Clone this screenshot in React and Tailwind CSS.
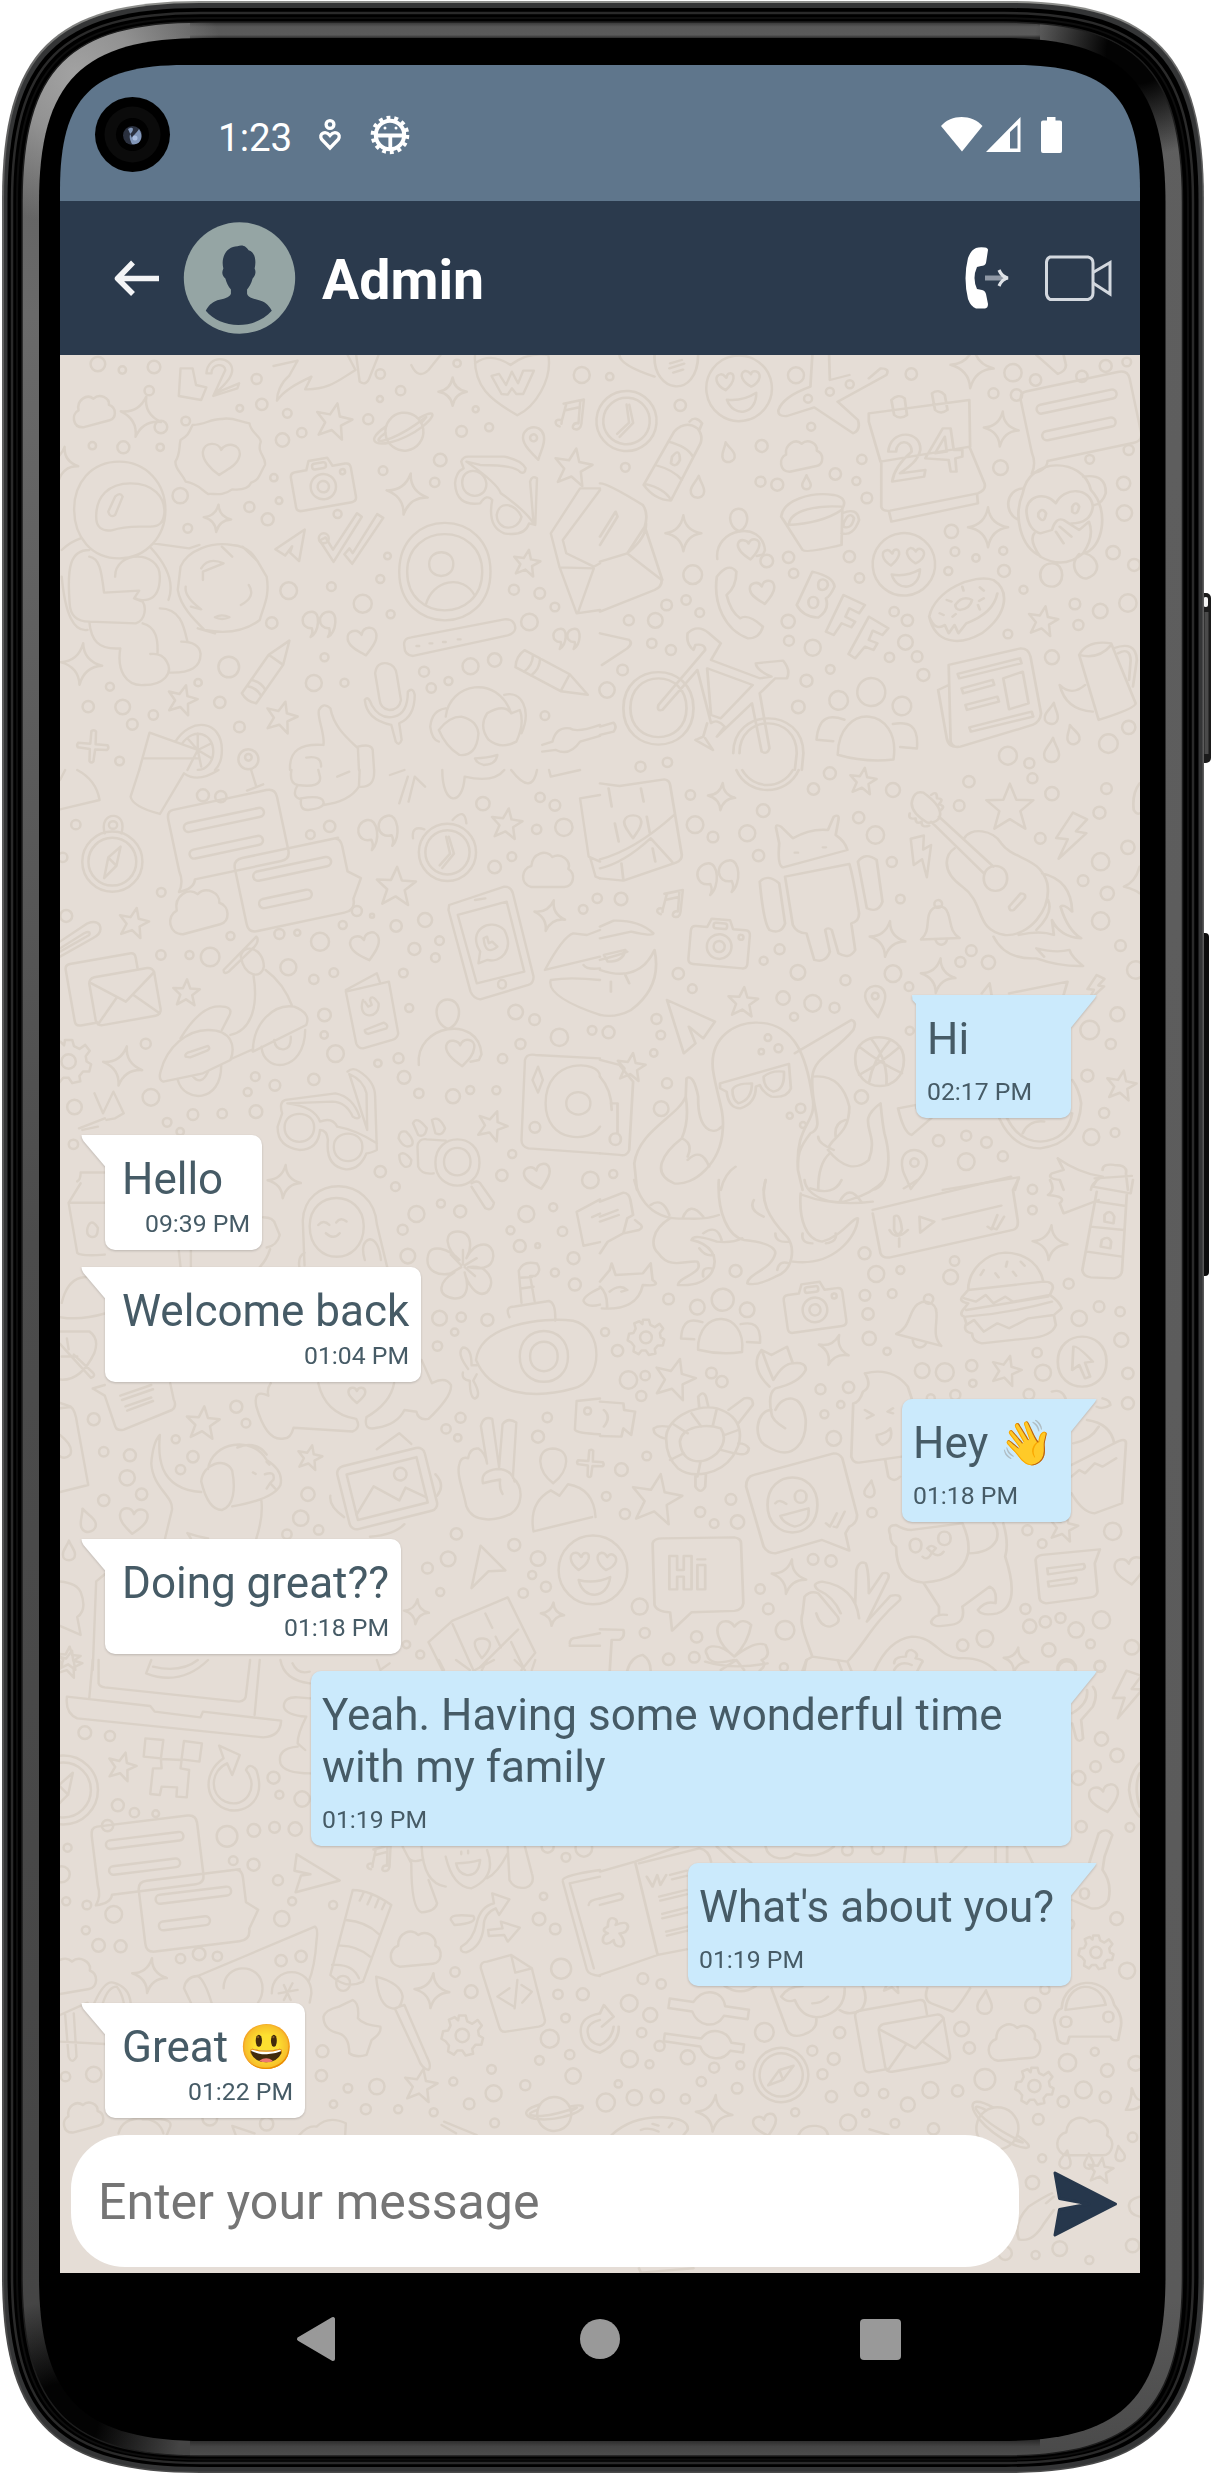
import React from "react";

/* ---------- Wallpaper doodles ---------- */

const SYMBOLS = {
  star: <path d="M0-46 L13-14 47-13 21 9 31 44 0 25-31 44-21 9-47-13-13-14Z" />,
  spark: <path d="M0-50 Q5-8 50 0 Q8 6 0 50 Q-6 8-50 0 Q-8-6 0-50Z" />,
  heart: <path d="M0 44 C-22 26-46 6-46-16 C-46-44-10-48 0-22 C10-48 46-44 46-16 C46 6 22 26 0 44Z" />,
  cloud: <path d="M-34 34 C-58 28-54-4-34-8 C-32-34-4-42 8-26 C26-36 46-18 40-2 C56 8 50 34 32 34 Z" />,
  drop: <path d="M0-48 C10-20 28-6 28 16 C28 52-28 52-28 16 C-28-6-10-20 0-48Z" />,
  quote: <path d="M-14-30 C-50-30-52 22-14 20 C-10 34-14 40-18 46 C8 30 14-30-14-30Z M38-30 C2-30 0 22 38 20 C42 34 38 40 34 46 C60 30 66-30 38-30Z" />,
  note: <path d="M-22 36 C-40 34-40 14-18 18 L-12-32 26-46 30 20 C14 18 10 40 24 38 C38 38 40 24 38 10 L36-50-20-30M-12-12 26-26M-18 18 V28" />,
  bolt: <path d="M-6-50 L26-44 10-14 32-16-10 50-2 6-26 10Z" />,
  pin: <><path d="M0 50 C-14 24-30 10-30-14 C-30-54 30-54 30-14 C30 10 14 24 0 50Z" /><circle cx="0" cy="-14" r="10" /></>,
  camera: <><path d="M-40-22 H-22 L-16-36 H14 L20-22 H40 Q48-22 48-14 V32 Q48 40 40 40 H-40 Q-48 40-48 32 V-14 Q-48-22-40-22Z" /><circle cx="0" cy="8" r="20" /><circle cx="0" cy="8" r="9" /><circle cx="34" cy="-10" r="4" /><rect x="-12" y="-30" width="22" height="9" rx="4" /></>,
  gear: <><path d="M-8-46 H8 L12-32 24-26 37-35 47-22 38-10 40 2 50 8 46 24 32 24 24 34 26 46 8 50 0 38-12 38-20 48-34 40-32 26-40 16-50 10-46-8-34-10-28-22-32-36-18-42-10-34Z" /><circle cx="0" cy="2" r="16" /></>,
  saturn: <><circle r="30" /><path d="M-28-12 C-72 10-40 22 2 8 C46-6 66-34 26-18" /><path d="M-30-2 C-60 14-30 12 0 0 C30-12 50-28 28-10" /></>,
  mail: <><path d="M-50 20 V-40 Q-50-46-44-46 H26 Q32-46 32-40 V-28M-50 20 Q-50 26-44 26 H-24" /><rect x="-26" y="-26" width="76" height="56" rx="7" /><path d="M-24-20 L12 8 50-20M-24 28 L2 2M48 28 L22 2" /></>,
  chat: <><path d="M-42-34 H42 Q50-34 50-26 V22 Q50 30 42 30 H-36 Q-38 38-52 38 Q-46 30-48 20 V-26 Q-48-34-42-34Z" /><rect x="-36" y="-20" width="72" height="8" rx="4" /><rect x="-36" y="4" width="66" height="8" rx="4" /></>,
  chat2: <><path d="M42-34 H-42 Q-50-34-50-26 V22 Q-50 30-42 30 H34 Q44 30 44 20 L54 4 44-4 V-26 Q44-34 38-34Z" /><rect x="-36" y="-20" width="68" height="8" rx="4" /><rect x="-36" y="4" width="46" height="8" rx="4" /></>,
  plane: <path d="M-44 12 L40-44 24 46-2 22 4 4-16 30Z" />,
  cursor: <path d="M-22-50 L46-6 8 4-22 50Z" />,
  love: <><circle r="48" /><path d="M-20 0 C-34-10-34-24-24-24 C-18-24-18-18-16-18 C-14-26-4-26-6-16 C-8-8-14-4-20 0Z M18 0 C6-8 2-22 12-24 C18-24 18-20 20-18 C24-26 34-20 32-12 C30-6 24-2 18 0Z M-20 14 Q2 20 24 10 C20 42-14 42-20 14Z" /></>,
  pencil: <path d="M-12-46 Q0-52 12-46 V18 L0 50-12 18Z M-12-34 Q0-28 12-34M-12-24 Q0-18 12-24M-12 18 H12" />,
  people: <><circle cx="0" cy="-30" r="15" /><circle cx="-34" cy="-18" r="10" /><circle cx="34" cy="-18" r="10" /><path d="M-30 40 C-34-18 34-18 30 40 Q0 46-30 40ZM-36 26 H-54 C-54 0-42-2-26 2 M36 26 H54 C54 0 42-2 26 2" /></>,
  person: <><path d="M0-4 C-12-8-16-20-16-28 C-16-52 16-52 16-28 C16-20 12-8 0-4Z" /><path d="M-44 46 C-48-12 44-24 46 34 L42 42 30 44" /><path d="M18 50 C4 40-6 30-4 20 C0 8 14 14 16 20 C22 8 38 12 36 24 C34 36 26 42 18 50Z" /></>,
  bell: <><path d="M-40 30 C-20 16-26-6-18-22 C-8-40 16-38 20-20 C26-2 20 20 40 34 Z" /><circle cx="2" cy="-40" r="8" /><path d="M-10 34 C-6 48 10 48 14 34" /></>,
  clock: <><circle r="44" /><circle r="34" /><path d="M-2-24 L4 2-12 20M2-24 L10 2-8 24" /></>,
  compass: <><circle r="44" /><circle r="35" /><path d="M12-22 L6 6-12 24-6-6Z M-6-6 L6 6" /></>,
  plus: <path d="M-8-46 Q0-52 6-46 L8-8 44-8 Q50 0 44 6 L8 8 6 44 Q0 52-6 44 L-8 8-44 6 Q-50 0-44-8 L-8-8Z" />,
  slider: <path d="M-50-20 H-20 C-10-40 14-40 20-20 H50 V-8 H20 C12 10-10 10-20-8 H-50Z M-50 24 H-4 C4 8 26 8 34 24 H50 V34 H34 C26 50 4 50-4 34 H-50Z" />,
  photo: <><rect x="-50" y="-36" width="100" height="72" rx="8" /><rect x="-40" y="-26" width="80" height="52" /><path d="M-40 20 L-14-6 10 16 20 4 40 20" /><circle cx="18" cy="-12" r="7" /></>,
  ticks: <path d="M-44 6 L-36 0-22 16 4-44 12-40-18 34Z M-4 20 L2 10 8 16 34-48 44-44 10 32Z" />,
};

/* Patches of the wallpaper: origin, scale, placed symbols [name, x, y, size, rotation], dots and free strokes. */
const PATCHES = [
  {
    o: [60, 350], s: [0.3444, 0.3333],
    items: [
      ["cloud", 96, 180, 125, -15], ["spark", 235, 200, 125, 15], ["star", 795, 212, 115, 12], ["saturn", 1000, 245, 190, -8], ["spark", 1140, 125, 85, 0],
      ["note", 1478, 195, 105, 8], ["pin", 1378, 278, 105, -12], ["star", 1490, 350, 120, 10], ["camera", 762, 395, 190, -10], ["spark", 1008, 432, 125, 10],
      ["spark", 457, 505, 82, 5], ["plane", 670, 585, 105, 0], ["ticks", 840, 575, 200, 10], ["star", 1355, 638, 85, 10], ["quote", 745, 815, 100, 0],
      ["heart", 880, 875, 95, -12], ["pencil", 605, 962, 220, 215], ["spark", 62, 942, 125, 5], ["star", 355, 1048, 95, 15], ["star", 643, 1100, 100, 15],
      ["pencil", 1430, 978, 240, -62], ["plus", 95, 1190, 100, 5], ["quote", 1465, 860, 80, 0], ["spark", 5, 340, 100, 10],
    ],
    dots: [[110, 42, 22], [181, 60, 11], [273, 51, 19], [259, 122, 14], [293, 231, 19], [365, 213, 13], [522, 175, 10], [586, 163, 17], [571, 87, 15], [660, 190, 13], [702, 248, 14], [646, 270, 20], [94, 287, 11], [184, 292, 18], [291, 292, 11], [349, 437, 23], [550, 471, 15], [621, 383, 11], [603, 508, 18], [371, 535, 13], [636, 452, 10], [806, 492, 12], [766, 565, 15], [930, 72, 14], [989, 122, 14], [929, 147, 9], [895, 208, 15], [938, 362, 13], [1088, 397, 14], [1104, 330, 19], [1166, 244, 16], [1246, 232, 12], [1515, 75, 24], [1207, 178, 9], [1153, 40, 11], [951, 618, 10], [930, 687, 12], [788, 710, 13], [664, 722, 25], [879, 761, 27], [615, 819, 17], [960, 793, 12], [490, 951, 31], [768, 922, 12], [737, 999, 24], [826, 998, 12], [1192, 949, 24], [1262, 930, 20], [1057, 965, 15], [1078, 1014, 14], [1128, 993, 12], [1363, 816, 25], [1318, 719, 15], [1393, 730, 16], [1437, 771, 13], [1408, 1097, 13], [145, 1010, 12], [182, 1071, 22], [82, 1070, 17], [210, 1123, 16], [271, 1095, 14], [401, 998, 11], [464, 1057, 17], [521, 1131, 16], [547, 1228, 30], [547, 1222, 10], [173, 1233, 13]],
    d: "M350 55 L385 55 395 105 425 112 410 150 345 138Z M425 70 C430 10 500 20 500 60 C500 90 455 125 450 130 L520 100 515 115 445 138 480 60 C478 38 440 40 440 70Z M620 48 L690 32 665 78 C640 100 630 130 630 152 C650 120 690 100 730 80 L712 118 C780 120 810 90 858 60 L835 15 M860 15 L870 95 Q890 110 900 80 L925 15 M1205 15 C1200 110 1250 150 1328 196 C1380 170 1430 90 1418 15 M1205 40 Q1250 5 1308 45 Q1360 5 1418 15 M1253 78 L1275 72 1295 105 1312 65 1330 100 1345 62 1376 62 1345 132 1325 132 1312 115 1300 134 1282 132Z M1020 45 Q1040 90 1070 60 L1105 15 M470 207 C500 200 520 215 550 220 C555 250 580 255 583 275 C570 310 600 320 595 345 C580 370 580 390 555 398 C545 420 520 420 500 418 C470 440 450 430 430 432 C410 420 400 400 365 395 C355 370 335 360 335 335 C350 310 345 290 350 270 C375 255 375 245 385 225 C420 225 440 205 470 207Z M462 375 C440 360 412 330 415 305 C420 275 460 275 468 300 C480 275 525 280 522 315 C515 350 480 360 462 375Z M41 480 C40 400 90 335 172 335 C250 335 306 400 306 480 C306 560 250 625 172 625 C90 625 42 560 41 480Z M105 500 C105 440 140 400 205 400 C270 400 306 440 303 490 C295 560 240 510 150 541 C120 545 105 530 105 500Z M140 485 L160 440 Q175 425 182 440 L160 495 Q145 505 140 485Z M85 600 C30 600 20 650 28 760 Q30 815 85 815 L220 820 C250 810 250 770 240 755 L215 745 230 722 128 728 C120 660 115 625 85 620 M160 680 C160 600 290 600 290 680 C290 770 225 750 220 745 M85 815 C90 870 110 900 175 895 C165 960 190 1010 245 1005 C300 1005 330 970 310 935 C300 915 280 910 262 912 M240 820 C280 830 285 870 283 912 M318 968 C380 970 410 950 408 910 C405 890 390 875 352 875 M370 875 C360 830 350 775 290 775 M270 580 L375 595 405 585 M265 595 Q340 680 315 750 M5 600 Q30 575 60 565 M5 680 Q20 850 80 840 M350 650 C370 600 440 575 500 585 C560 590 570 630 600 680 C610 740 590 770 580 810 C530 850 470 850 420 840 C390 810 350 770 342 720Z M410 655 Q430 620 475 640 L415 665 415 690 M365 710 Q360 740 410 778 L380 770 M548 705 Q570 740 525 765 M450 802 Q470 790 492 802 Q470 812 450 802Z M470 590 L500 620 M530 590 L575 635 M400 835 L450 850 M985 665 C985 470 1250 470 1250 665 C1250 860 985 860 985 665Z M1008 665 C1008 515 1226 515 1226 665 C1226 820 1008 820 1008 665Z M1072 642 C1072 595 1142 595 1142 642 C1142 690 1072 690 1072 642Z M1062 765 C1080 690 1170 670 1205 738 M1165 335 Q1170 320 1185 320 L1290 320 Q1340 330 1352 355 Q1350 375 1335 365 Q1320 345 1220 345 L1180 335 Q1270 400 1280 430 Q1350 480 1375 520 L1365 395 Q1370 375 1385 385 L1380 525 1362 520 Q1350 560 1290 550 Q1240 530 1255 450 Q1240 430 1220 460 Q1150 470 1147 400 Q1150 365 1172 355Z M1168 400 C1165 350 1230 350 1238 400 C1240 450 1170 450 1168 400Z M1268 495 C1275 450 1320 460 1340 500 C1330 545 1270 545 1268 495Z M1568 415 L1510 415 1425 550 1450 650 1500 790 1568 780 M1568 420 L1460 570 1470 610 1550 650 1568 640 M1450 652 L1550 655 1505 785 M1000 890 Q995 865 1020 862 L1290 808 Q1320 805 1322 835 Q1320 850 1300 856 L1025 918 Q1000 915 1000 890Z M1035 888 h8 M1073 880 h8 M1112 876 h8 M1155 868 h8 M915 970 Q920 935 950 940 Q975 945 978 975 L990 1050 Q985 1080 955 1080 Q930 1075 928 1050Z M885 1050 Q895 1035 905 1065 Q930 1110 970 1100 Q1010 1090 1010 1025 Q1025 1010 1030 1035 Q1030 1100 985 1120 L992 1170 Q985 1190 975 1175 L962 1125 Q890 1110 885 1050Z M230 1260 L260 1148 400 1200 370 1260 M240 1225 L400 1225 M335 1175 C380 1100 470 1110 470 1200 C470 1230 460 1250 450 1260 M355 1180 C390 1130 445 1150 445 1205 C445 1235 425 1260 400 1260 M400 1200 L370 1165 M400 1200 L400 1150 M400 1200 L440 1180 M400 1200 L440 1225 M400 1200 L410 1250 M668 1260 C665 1200 700 1180 765 1185 C770 1150 745 1100 752 1080 Q765 1055 785 1075 C795 1130 830 1160 865 1195 L868 1260 M865 1190 Q905 1180 908 1200 L912 1260 M715 1223 Q760 1215 758 1250 M1120 1100 C1130 1000 1270 970 1310 1090 M1075 1130 Q1080 1080 1120 1075 M1290 1035 C1340 1020 1370 1080 1340 1150 M1075 1130 Q1080 1170 1100 1175 M1100 1140 Q1130 1100 1165 1100 Q1210 1110 1215 1150 Q1210 1220 1160 1215 Q1120 1190 1100 1140Z M1240 1090 Q1290 1060 1310 1090 L1335 1080 Q1350 1120 1325 1175 Q1280 1200 1245 1170 Q1215 1130 1240 1090Z M1205 1225 Q1240 1225 1270 1215 Q1265 1245 1230 1245 Q1210 1240 1205 1225Z M1400 1185 L1430 1175 Q1440 1130 1480 1135 Q1500 1150 1568 1125 M1400 1205 L1440 1200 Q1480 1220 1510 1175 L1568 1158",
  },
  {
    o: [600, 350], s: [0.3896, 0.3333],
    items: [
      ["love", 357, 115, 205, -8], ["clock", 68, 213, 205, 5], ["drop", 328, 308, 66, -12], ["cloud", 515, 315, 125, -12], ["spark", 955, 50, 130, 5], ["spark", 1030, 237, 105, 5],
      ["chat", 1233, 208, 340, -12], ["drop", 251, 412, 72, 5], ["drop", 530, 398, 46, 0], ["spark", 214, 550, 108, 0], ["person", 358, 550, 160, -3], ["spark", 996, 532, 120, 0],
      ["love", 780, 643, 195, -5], ["heart", 418, 727, 80, -10], ["star", 1137, 812, 95, 10], ["people", 690, 1110, 280, 5], ["drop", 1160, 1092, 70, 10], ["drop", 1213, 1155, 65, -15], ["drop", 1160, 1202, 80, 5],
    ],
    dots: [[25, 80, 11], [206, 166, 17], [503, 76, 24], [534, 146, 12], [590, 125, 12], [641, 103, 12], [799, 72, 17], [542, 230, 12], [415, 288, 18], [672, 328, 14], [604, 372, 17], [412, 395, 15], [455, 404, 18], [658, 393, 12], [685, 444, 16], [65, 352, 13], [484, 622, 17], [428, 633, 19], [640, 620, 17], [497, 670, 14], [666, 684, 14], [238, 674, 28], [171, 765, 16], [221, 750, 14], [256, 788, 13], [74, 811, 15], [142, 811, 22], [133, 880, 14], [182, 900, 15], [58, 960, 16], [18, 1020, 23], [483, 814, 20], [485, 872, 15], [546, 893, 24], [530, 992, 18], [591, 958, 13], [509, 1071, 19], [755, 785, 14], [789, 811, 17], [784, 877, 22], [743, 922, 14], [814, 920, 16], [830, 975, 18], [902, 544, 20], [911, 605, 13], [965, 624, 11], [894, 663, 12], [1035, 602, 12], [1037, 663, 18], [1087, 719, 12], [1047, 852, 13], [1028, 353, 22], [1010, 130, 15], [1069, 135, 17], [1060, 68, 26], [1118, 90, 17], [1298, 48, 18], [1237, 79, 17], [1352, 36, 13], [1257, 328, 13], [1357, 300, 15], [1344, 400, 20], [1346, 489, 23], [1317, 608, 20], [1371, 645, 18], [1219, 762, 16], [1284, 783, 22], [1355, 759, 26], [1228, 825, 15], [1160, 922, 21], [1357, 1132, 20], [1305, 1181, 28], [1047, 1217, 27], [1102, 1240, 15], [173, 1237, 14], [104, 1250, 15]],
    d: "M50 15 Q50 45 140 80 M140 15 C135 130 250 150 252 15 M180 40 l30 -10 M178 55 l38 -14 M188 68 l25 -9 M545 15 L540 110 Q470 140 458 180 Q455 200 480 198 L550 172 650 250 Q670 240 662 210 L610 155 735 75 Q745 55 720 55 L690 85 M588 15 L590 90 640 75 M112 405 L190 245 Q220 210 250 235 Q265 255 258 280 L182 452 Q140 450 112 405Z M175 275 Q225 290 238 320 M142 345 Q190 360 210 390 M115 402 Q165 415 182 450 M230 215 Q245 195 262 220 L255 240 M185 320 Q205 290 205 330 Q195 355 182 340Z M690 190 L948 150 950 290 720 335 690 215Z M722 335 L722 470 Q725 485 745 482 L970 430 Q992 420 987 400 L948 290 M742 485 L748 515 970 460 968 435 M748 150 Q765 130 782 145 L788 195 Q770 210 755 195Z M852 130 Q870 115 885 135 L892 180 Q875 195 860 180Z M740 305 C745 235 825 240 822 300 C815 340 780 360 770 370 L835 360 832 380 750 395 Q755 350 800 305 C800 265 760 270 760 305Z M880 235 L900 235 908 300 930 300 930 320 912 325 915 365 900 365 895 330 835 325Z M860 310 L890 305 885 260Z M465 500 C470 450 540 425 600 435 Q640 445 620 480 Q570 520 480 525Z M485 522 C490 480 560 465 620 470 M465 500 L520 600 Q530 610 620 585 L622 480 M622 490 Q660 470 665 510 Q650 560 620 550 M625 520 Q640 480 652 505 Q645 540 625 530Z M1085 430 C1100 320 1240 320 1260 420 C1310 480 1290 600 1240 610 M1085 430 C1060 500 1080 590 1130 618 M1085 415 C1040 420 1035 490 1075 510 M1240 380 Q1300 370 1298 430 Q1290 460 1270 465 M1095 490 C1090 440 1140 420 1170 460 C1190 410 1260 410 1265 470 C1260 520 1220 520 1210 520 M1095 490 Q1100 540 1130 550 L1160 540 Q1170 500 1190 510 L1230 540 1255 515 Q1270 560 1240 610 Q1190 660 1130 620 Q1100 570 1115 550 M1180 530 l30 30 M1170 545 l20 35 M1160 640 C1120 640 1120 710 1160 710 C1195 710 1195 640 1160 640Z M1230 612 C1200 650 1230 690 1250 685 C1290 670 1280 620 1245 610 M1125 490 Q1135 470 1145 490 Q1140 525 1125 500Z M1212 470 Q1222 450 1230 470 Q1225 500 1212 485Z M0 400 Q20 400 110 465 Q125 490 115 530 L70 610 0 635 M70 610 L158 690 Q160 710 140 720 L0 785 M115 530 L160 690 M0 560 L40 485 45 500 0 585 M75 605 Q120 560 118 520 M300 680 Q330 635 350 665 Q350 710 325 735 Q335 785 360 805 Q380 790 418 830 Q410 865 380 865 C320 840 290 760 300 680Z M545 665 Q600 680 602 710 Q590 740 580 745 Q590 780 560 803 Q520 800 505 765Z M560 705 C560 680 585 685 585 705 C580 725 560 725 560 705Z M535 757 C535 735 560 735 560 757 C560 780 535 780 535 757Z M625 735 L680 765 665 790 640 775 630 800 655 815 645 832 620 820 600 855 580 845Z M690 800 L740 835 725 855 700 842 690 870 712 880 702 900 680 890 655 925 638 912Z M845 800 C860 720 960 670 1010 690 C1050 720 1050 790 980 850 C920 890 860 880 845 800Z M845 800 Q860 845 885 825 L895 850 910 825 920 850 940 820 Q1010 790 1020 730 M912 765 Q930 735 955 750 Q950 775 925 780 Q912 778 912 765Z M872 790 l10 5 M890 750 l12 5 M930 710 l3 12 M975 712 l10 10 M985 745 l-12 8 M970 765 l5 14 M905 800 l8 -8 M0 850 L75 870 Q85 880 70 895 L5 945 M60 1075 C60 930 240 930 240 1075 C240 1220 60 1220 60 1075Z M78 1075 C78 955 222 955 222 1075 C222 1190 78 1190 78 1075Z M342 1210 C342 1070 522 1070 522 1210 L518 1260 M358 1210 C358 1090 505 1090 505 1210 L500 1260 M150 1065 L270 900 Q270 880 245 885 L240 900 Q220 880 225 850 Q250 820 280 850 L310 880 285 930 410 985 440 980 Q400 960 400 940 L470 932 Q490 960 480 985 L450 985 410 1030 435 1195 Q430 1215 415 1205 L390 1060 300 1160 320 1130 Q300 1105 285 1120 L250 960 160 1080 Q145 1085 150 1065Z M275 955 L392 1005 310 1105 285 1095Z M245 1170 L265 1160 275 1120 M245 1170 L290 1200 270 1165 M895 945 L1080 895 Q1100 895 1105 920 L1132 1090 Q1130 1115 1110 1125 L925 1190 Q905 1195 900 1175Z M868 1020 L895 1005 M868 1020 L890 1165 Q895 1195 920 1190 M918 972 L1078 925 1082 940 922 985Z M928 1015 L1008 990 1012 1005 932 1030Z M938 1065 L1020 1040 1024 1055 942 1080Z M948 1132 L1108 1085 1112 1100 952 1145Z M1035 985 L1085 965 1100 1060 1050 1078Z M1230 915 Q1250 870 1312 880 L1375 1060 Q1375 1075 1280 1110Z M1230 915 Q1280 930 1312 885 M1318 895 Q1375 870 1378 930 L1368 1010 M1330 910 Q1360 890 1362 930 L1358 990 M1245 1005 Q1210 1040 1180 1005 Q1195 1080 1265 1085 M1120 15 L1175 72 Q1200 60 1195 40 L1190 15 M0 1130 L35 1118 Q45 1130 35 1145 L0 1155",
  },
  {
    o: [60, 770], s: [0.3444, 0.3333],
    items: [
      ["chat", 487, 203, 340, -12], ["chat2", 692, 350, 350, -12], ["compass", 152, 275, 205, 0], ["quote", 915, 182, 120, -12], ["star", 1297, 160, 98, 8], ["clock", 1125, 247, 195, 0], ["star", 976, 348, 125, 3],
      ["cloud", 1418, 300, 150, 0], ["cloud", 398, 420, 175, -15], ["star", 214, 457, 95, 12], ["heart", 888, 530, 95, -15], ["mail", 158, 680, 260, -10], ["spark", 1422, 437, 95, 15], ["star", 367, 667, 85, 3],
      ["person", 1128, 785, 210, -2], ["gear", 25, 872, 135, 0], ["spark", 182, 888, 120, 12], ["star", 1255, 1065, 95, 20], ["heart", 1388, 1220, 85, -15], ["spark", 651, 1235, 100, 5],
    ],
    dots: [[46, 164, 14], [415, 76, 18], [467, 80, 17], [8, 262, 14], [727, 194, 13], [783, 169, 17], [1228, 101, 20], [1384, 178, 14], [1463, 172, 26], [1394, 82, 14], [1437, 106, 16], [1262, 291, 19], [1312, 260, 13], [294, 367, 13], [18, 438, 18], [862, 423, 15], [906, 437, 6], [821, 465, 12], [976, 468, 17], [1060, 450, 21], [637, 492, 15], [689, 488, 9], [755, 515, 27], [495, 498, 12], [293, 555, 14], [376, 555, 12], [436, 561, 28], [663, 592, 24], [795, 608, 13], [737, 628, 14], [1029, 537, 18], [1102, 512, 13], [1090, 563, 13], [997, 609, 13], [1014, 714, 12], [768, 735, 19], [767, 795, 11], [800, 851, 25], [1323, 726, 22], [1378, 749, 16], [1450, 802, 26], [1545, 781, 13], [1337, 822, 15], [1285, 866, 14], [249, 821, 15], [264, 982, 25], [42, 1011, 22], [386, 1034, 16], [471, 1031, 14], [569, 1025, 19], [624, 946, 16], [567, 920, 13], [545, 966, 12], [737, 928, 17], [923, 880, 11], [983, 865, 15], [999, 922, 19], [1042, 970, 14], [1141, 979, 21], [1191, 960, 12], [1267, 961, 12], [311, 1057, 13], [349, 1085, 11], [39, 1123, 14], [1313, 1152, 12], [1379, 1072, 16], [930, 1205, 17], [1283, 1216, 17], [974, 1250, 13], [1540, 1230, 25], [1519, 418, 13], [1560, 385, 14]],
    d: "M0 30 L15 0 M50 0 Q105 30 115 90 L0 118 M230 0 L205 80 Q210 110 290 132 L360 10 Q400 40 460 0 M555 0 L570 50 M543 62 L590 43 M672 0 Q665 40 690 45 Q670 80 700 88 Q695 120 720 120 Q770 115 765 95 Q760 75 700 85 M690 45 Q760 55 755 20 L750 0 M765 105 Q840 95 868 50 L870 0 M868 50 Q915 55 912 0 M805 20 L840 5 M958 15 L1000 0 M985 100 L1010 20 M1012 95 L1030 20 1060 50 M1110 0 C1110 110 1170 110 1175 20 M1175 20 Q1260 40 1290 0 M1310 0 Q1370 80 1385 0 M1420 0 L1425 20 1510 0 M130 190 C110 120 200 120 178 190 M142 165 C142 150 166 150 166 165 C166 180 142 180 142 165Z M1025 205 Q1020 165 1058 178 M1140 150 Q1175 110 1180 160 M0 560 L95 505 Q125 490 115 465 Q105 450 80 460 L0 515 M0 545 L85 495 Q90 480 70 490 L0 535 M1130 405 L1290 350 Q1310 350 1315 370 L1375 620 Q1375 640 1360 645 L1220 688 Q1200 685 1192 665 L1128 420Z M1155 435 L1297 395 1348 605 1210 640Z M1205 390 L1235 385 M1272 643 C1272 625 1295 625 1295 643 C1295 660 1272 660 1272 643Z M1215 580 L1220 545 C1180 480 1250 440 1290 480 C1320 540 1280 580 1240 570Z M1230 505 Q1235 560 1270 530 L1255 515 1245 520 1240 500Z M1568 75 L1510 85 1535 260 1568 275 M1540 265 L1555 320 1568 325 M1568 480 L1530 495 1490 490 Q1460 500 1408 600 L1568 560 M1568 630 Q1480 620 1425 630 Q1410 680 1568 735 M1520 585 Q1530 600 1568 595 M475 600 L570 500 Q580 510 565 530 L490 605 Q475 615 475 600Z M525 560 C530 520 590 530 592 590 C585 630 535 620 525 560Z M562 618 C575 700 560 780 495 795 M597 600 Q650 640 675 710 M350 805 Q400 720 450 710 Q510 705 490 740 L470 780 M292 905 C310 830 370 780 430 780 C500 780 510 830 495 870 L415 910 300 935 Q285 930 292 905Z M365 860 Q360 850 380 845 L430 828 Q440 838 420 845 L378 862Z M342 930 C360 1000 470 1000 468 885 M385 918 Q410 950 430 905 M560 845 C560 760 620 700 680 710 Q730 730 715 765 L560 845Z M495 868 L560 838 M585 830 C590 910 710 910 712 780 M622 810 Q625 840 650 838 Q672 835 670 800 M830 660 L920 610 930 640 M830 665 L955 635 982 790 Q980 805 965 810 L880 835 Q865 835 860 820Z M880 690 C860 750 930 750 925 700 Q905 670 900 690 L905 705 895 710 885 695 M885 780 L940 758 Q955 765 948 775 L895 792 Q885 790 885 780Z M835 905 Q850 890 870 905 Q915 935 915 980 L920 1140 Q900 1150 890 1150 Q870 1200 830 1198 Q770 1190 778 1110 Q775 1080 755 1080 Q750 1140 695 1140 Q630 1130 632 1070 L645 1030 Q635 995 655 990 L800 970 Q850 980 870 1040 Q865 1050 850 1040 Q830 995 790 995 L660 1000 Q740 1010 755 1055 Q790 1040 805 1070 Q860 1080 920 1120 M892 1080 L890 970 Q880 930 840 912Z M652 1072 C652 1018 738 1018 738 1072 C738 1130 652 1130 652 1072Z M795 1130 C795 1078 878 1078 878 1130 C878 1188 795 1188 795 1130Z M1350 870 Q1355 850 1380 855 L1568 865 M1350 870 L1340 1110 Q1340 1130 1360 1135 L1568 1150 M1410 1000 C1410 860 1568 870 1568 920 M1410 1000 C1410 1120 1540 1120 1568 1070 M1470 1000 C1470 955 1540 955 1540 1000 C1540 1045 1470 1045 1470 1000Z M1372 930 L1388 890 1402 930 1388 968Z M983 1105 Q985 1080 1005 1085 Q1030 1110 1022 1125 Q1000 1140 983 1105Z M985 1155 Q1000 1140 1020 1170 Q1020 1195 1000 1190 Q985 1180 985 1155Z M1025 1060 Q1035 1035 1065 1075 Q1060 1105 1040 1095Z M1080 1050 Q1100 1035 1118 1075 Q1110 1100 1090 1090Z M1038 1130 Q1040 1105 1065 1108 L1120 1112 M1038 1130 L1040 1190 Q1050 1215 1085 1210 M1090 1178 C1090 1085 1218 1085 1218 1178 C1218 1270 1090 1270 1090 1178Z M1115 1175 C1115 1120 1192 1120 1192 1175 C1192 1230 1115 1230 1115 1175Z M100 970 L125 1030 155 965 185 1030 160 1045 135 1050 M55 1075 L130 1045 M65 1080 L110 1070",
  },
  {
    o: [600, 770], s: [0.3896, 0.3333],
    items: [
      ["spark", 312, 80, 82, 5], ["star", 675, 32, 85, 8], ["star", 1052, 110, 150, 0], ["bolt", 1205, 200, 145, 15], ["bolt", 826, 260, 125, -25], ["quote", 295, 315, 125, -8], ["note", 178, 402, 95, 8], ["camera", 307, 515, 185, 5],
      ["spark", 738, 507, 108, 8], ["bell", 870, 460, 145, -5], ["spark", 868, 617, 105, 8], ["star", 367, 695, 95, 5], ["pin", 708, 692, 100, -8], ["bolt", 1270, 655, 80, 15], ["star", 80, 890, 90, 8], ["star", 1338, 945, 95, 10], ["pin", 805, 1195, 125, 8],
    ],
    dots: [[232, 75, 14], [419, 122, 19], [548, 57, 17], [590, 10, 18], [752, 60, 21], [664, 143, 17], [707, 195, 26], [244, 164, 25], [290, 201, 16], [378, 190, 24], [407, 257, 17], [749, 276, 15], [922, 107, 16], [947, 35, 17], [1110, 25, 15], [1160, 71, 20], [1282, 128, 18], [1300, 56, 16], [1130, 205, 16], [1355, 232, 20], [1285, 275, 26], [1240, 332, 16], [1302, 370, 20], [1285, 453, 26], [1336, 527, 16], [771, 387, 13], [54, 387, 19], [461, 538, 15], [420, 572, 12], [508, 607, 22], [201, 611, 17], [237, 656, 13], [630, 631, 15], [752, 611, 25], [793, 650, 13], [925, 576, 15], [953, 542, 16], [997, 577, 20], [470, 684, 20], [546, 700, 25], [602, 713, 15], [498, 740, 12], [145, 747, 15], [22, 787, 18], [156, 795, 13], [138, 849, 11], [795, 782, 12], [1257, 780, 28], [1311, 822, 15], [1328, 733, 21], [1375, 600, 26], [1251, 917, 18], [1294, 1029, 15], [1261, 1101, 24], [1322, 1088, 13], [869, 1112, 17], [940, 1097, 15], [992, 1117, 16], [940, 1175, 25], [1034, 1159, 15], [671, 981, 20], [157, 1016, 22], [172, 940, 15], [34, 1212, 12], [515, 1015, 14], [487, 1037, 9], [521, 1065, 9], [431, 803, 10], [458, 835, 12], [414, 845, 8]],
    d: "M0 40 L50 48 165 28 Q178 30 180 45 L210 255 Q210 272 195 278 L60 332 0 325 M0 268 Q90 240 190 135 M0 295 Q60 280 130 205 L185 275 M22 55 L30 110 M38 160 L48 215 M55 280 L60 330 M105 55 L112 95 M120 140 L128 190 M135 235 L142 275 M85 205 C70 180 62 170 62 155 C65 130 105 130 106 155 C106 175 95 185 85 205Z M350 0 C380 80 480 80 510 0 M365 0 C395 60 465 60 495 0 M0 505 L80 485 Q135 500 137 490 Q100 450 35 452 L0 470 M0 600 Q100 640 140 540 Q160 650 80 720 Q40 745 0 735 M0 570 Q50 555 70 545 M10 555 L65 540 Q60 575 20 575Z M28 635 V665 M65 615 L75 640 M452 175 Q450 160 465 170 L495 205 Q540 175 585 180 L600 140 Q615 130 612 150 L605 195 Q630 215 635 240 L470 292 Q455 290 460 220Z M500 248 h8 M572 232 h8 M475 320 L640 282 Q650 320 665 430 Q665 455 645 460 L655 540 Q640 570 612 550 L595 480 Q585 470 578 480 L590 545 Q580 580 550 570 L530 490 Q505 490 495 465Z M410 335 Q430 310 460 340 L475 460 Q465 495 435 480 Q420 460 410 335Z M662 275 Q680 245 710 270 L725 395 Q715 430 685 415Z M800 100 Q805 60 830 68 Q880 110 872 140 Q865 160 840 158 Q800 130 800 100Z M850 75 q15 -15 15 10 q20 0 5 18 q20 5 2 20 M795 130 q-5 20 15 15 q0 20 15 10 q0 20 20 12 M870 140 L1010 290 M850 155 L985 310 M985 325 C985 275 1045 275 1045 325 C1045 375 985 375 985 325Z M935 205 C950 170 1010 180 1030 220 C1060 270 1130 260 1148 340 C1160 420 1100 500 1040 495 C960 480 990 400 930 350 C870 300 890 250 910 235 M1050 410 L1080 370 Q1095 370 1090 385 L1062 420 Q1050 425 1050 410Z M1135 310 Q1210 330 1212 425 Q1190 400 1182 410 Q1200 480 1235 505 Q1180 500 1160 450 L1165 495 Q1130 480 1075 495 M1150 390 Q1165 430 1120 480 M1010 500 Q1040 570 1120 565 Q1180 590 1240 588 Q1210 560 1205 540 Q1170 550 1120 535 L1140 560 M172 690 L295 755 265 805 228 770 245 820 215 850Z M290 900 C280 800 350 755 405 758 C500 760 530 860 545 980 C560 1060 500 1060 508 1200 L520 1260 M290 900 C300 980 320 1020 315 1080 C310 1180 240 1250 190 1240 C130 1210 160 1150 210 1105 Q230 1050 220 980 C200 1040 100 1080 88 1180 L95 1260 M220 980 L222 925 Q240 910 252 980 C250 1080 290 1100 312 1070 M308 940 L485 882 490 955 Q480 985 440 980 Q420 970 410 945 L400 950 Q400 1000 360 1015 Q330 1015 325 965 L308 955Z M340 960 Q345 940 390 940 Q390 990 355 1000 Q340 990 340 960Z M420 920 Q440 900 472 905 Q475 960 445 965 Q420 955 420 920Z M500 850 L645 750 Q660 755 650 780 C600 850 550 860 545 920 C540 1020 580 1070 540 1090 C500 1150 510 1170 508 1200 M545 920 Q620 910 640 1010 C640 1100 590 1100 585 1140 Q640 1220 690 1170 C720 1080 650 1060 720 1000 Q725 1060 730 1090 C750 1170 740 1250 700 1260 M590 1150 Q560 1180 560 1260 M605 1100 Q600 1060 630 1050 M600 1140 Q560 1120 560 1100 M210 1105 Q240 1120 225 1160 M225 1170 Q260 1130 280 1190 M655 865 C655 780 780 780 780 870 C780 975 655 975 655 865Z M665 830 Q720 880 775 910 M665 915 Q720 880 770 830 M695 805 Q740 870 735 945 M745 810 Q700 870 690 940 M1050 670 L1200 635 1190 675 M980 670 L1000 640 1005 675 M765 1015 L812 1005 812 1015 M765 1015 Q780 1090 800 1095 L850 1045 M1025 1045 Q1060 1135 1130 1135 Q1230 1120 1235 1000 Q1230 960 1212 930 M1045 1045 Q1075 1115 1130 1115 Q1200 1110 1212 1030 M1085 1090 Q1100 1050 1140 1055 M1175 1165 Q1230 1210 1290 1220 Q1260 1240 1260 1260 M1175 1165 L1190 1200 1160 1210 Q1145 1225 1180 1230 L1190 1260 M1290 1200 Q1290 1180 1320 1185 Q1355 1185 1350 1210 L1355 1260 M1270 1225 L1365 1218 M1385 40 Q1365 70 1370 120 Q1378 135 1385 130 M1385 290 Q1375 335 1345 350 Q1375 360 1385 370 M0 870 L50 885 85 935 75 1140 Q70 1160 50 1155 L0 1150 M0 920 Q30 960 30 1020 M28 1000 H45 V1090 M40 1090 C20 1090 20 1125 40 1125 C58 1125 58 1090 40 1090Z M310 1260 Q320 1210 348 1190 M420 1260 L425 1230 M880 1260 L1075 1222 1065 1260",
  },
  {
    o: [60, 1110], s: [0.3444, 0.3571],
    items: [
      ["star", 415, 875, 105, 5], ["star", 725, 972, 78, 12], ["photo", 950, 1060, 270, -14], ["heart", 213, 1150, 90, 5], ["drop", 78, 1150, 80, -20], ["drop", 26, 1235, 65, 0], ["cursor", 1235, 1285, 130, 12], ["spark", 1035, 1405, 75, 5], ["spark", 1430, 1412, 70, 5],
      ["heart", 862, 798, 55, 0], ["plus", 1540, 990, 85, 5], ["star", 25, 1535, 75, 5],
    ],
    dots: [[1035, 291, 24], [1106, 262, 12], [1162, 284, 18], [995, 335, 15], [1010, 409, 22], [1335, 381, 18], [1387, 380, 7], [1354, 291, 24], [1432, 272, 12], [1459, 340, 14], [1491, 415, 18], [1308, 337, 12], [1495, 489, 18], [1437, 455, 12], [1102, 583, 22], [1165, 580, 14], [1241, 588, 18], [1146, 622, 11], [1096, 661, 14], [512, 831, 18], [540, 877, 13], [386, 971, 17], [336, 922, 12], [98, 866, 18], [127, 957, 14], [203, 967, 18], [195, 1030, 23], [237, 1076, 17], [127, 1093, 17], [350, 1007, 14], [720, 1076, 20], [699, 1143, 23], [751, 1176, 14], [659, 1188, 14], [1163, 862, 15], [1121, 893, 14], [1155, 918, 11], [1388, 915, 18], [1415, 861, 14], [1151, 1187, 17], [1127, 1257, 22], [1067, 1283, 16], [1104, 1350, 12], [1371, 1302, 12], [1319, 1218, 18], [1388, 1256, 22], [1411, 1335, 15], [1345, 1353, 14], [1046, 1525, 12], [1006, 1497, 11]],
    d: "M60 175 L130 175 M60 175 Q60 195 50 200 M25 260 L130 260 M60 205 L25 260 50 400 Q60 410 130 405 M80 330 Q90 300 110 330 Q110 360 90 355 Q75 350 80 330Z M590 300 Q620 300 625 320 L638 350 Q630 380 600 385 M345 395 L350 440 M380 392 V440 M610 390 Q600 420 580 440 M710 435 L705 310 C710 180 910 180 920 320 L950 440 M725 325 C725 220 880 220 882 325 C882 440 725 440 725 325Z M750 322 Q765 305 782 322 M802 315 Q815 298 832 312 M772 345 Q795 365 812 345 M695 440 Q690 410 710 400 M885 420 Q870 370 900 362 Q925 365 932 420 M1195 205 Q1210 195 1220 205 L1260 260 Q1255 285 1235 275 L1195 215 M1568 250 L1500 285 1520 380 1568 370 M1545 300 L1568 290 M1160 420 C1120 390 1110 340 1155 340 C1200 340 1195 390 1180 415 C1210 360 1260 370 1258 410 C1255 450 1210 445 1185 440 C1240 430 1270 480 1240 510 C1210 530 1180 480 1175 455 C1190 500 1180 530 1145 528 C1090 520 1100 480 1145 455 C1100 470 1060 450 1068 410 C1075 370 1130 390 1160 420Z M1165 435 l-30 -30 M1170 432 l0 -40 M1175 435 l35 -20 M1175 440 l30 25 M1165 440 l-35 20 M0 620 L85 620 Q115 640 100 680 Q60 760 0 755 M0 655 L90 750 Q105 745 95 735 L40 685 M5 690 L50 690 M20 640 L25 670 M0 580 Q60 590 130 570 M5 540 Q20 480 60 470 L130 460 M95 780 L130 770 M95 780 L130 800 160 885 Q165 900 185 895 L325 840 Q340 830 330 810 L320 765 M175 800 L265 770 M180 812 L270 782 M190 830 L265 805 M195 842 L270 815 M0 820 L30 830 Q45 840 50 880 L82 1050 0 1070 M0 835 L30 832 M0 910 Q40 940 30 965 Q15 980 0 970 M570 830 Q560 780 605 800 Q600 780 612 765 M570 830 Q600 930 650 920 Q670 920 678 890 L850 900 Q875 890 860 865 Q770 850 750 765 M970 765 Q960 820 890 860 Q880 900 920 890 Q980 880 1000 840 L1035 845 Q1040 870 1070 865 Q1140 800 1135 770 Q1120 745 1080 765 L1050 700 M1305 580 Q1290 550 1320 550 L1420 535 Q1440 540 1438 590 M1340 540 L1332 450 Q1345 420 1385 430 Q1400 450 1380 465 L1365 465 1378 535 M1335 470 L1370 468 M1338 500 L1375 495 M1208 700 C1220 600 1400 580 1490 590 C1580 610 1580 760 1490 780 C1380 810 1250 800 1208 700Z M1335 690 C1335 595 1475 595 1475 690 C1475 785 1335 785 1335 690Z M1365 690 C1365 635 1445 635 1445 690 C1445 745 1365 745 1365 690Z M1185 725 Q1150 680 1170 665 Q1195 665 1195 715 L1210 715 M1170 735 Q1165 755 1190 758 Q1190 805 1205 808 Q1225 800 1200 758 L1210 740 M1565 500 Q1520 520 1520 535 Q1530 555 1568 545 M265 990 Q270 930 290 910 C285 960 280 1060 410 1070 M265 990 C270 1060 330 1080 325 1120 L305 1200 M430 1005 C440 930 560 910 600 980 Q650 1010 640 1050 Q620 1090 500 1110 M410 1040 C415 990 480 970 500 1010 C510 1060 505 1110 470 1120 Q430 1120 410 1040Z M515 945 Q570 925 600 965 M600 985 l8 8 M560 1015 l8 4 M595 1020 Q625 1010 620 1035 L610 1045 600 1060 M610 1045 L625 1060 M585 1095 Q590 1140 570 1200 M370 1185 L380 1200 M370 1185 Q400 1195 430 1200 M920 950 L985 905 1020 935 M1090 1020 Q1120 1050 1095 1080 M785 1080 Q780 1110 825 1140 M1000 1160 Q970 1190 900 1195 M1180 1110 C1170 1060 1150 1020 1160 990 Q1165 970 1185 975 Q1190 945 1215 948 Q1235 960 1240 990 L1222 885 Q1230 855 1255 865 L1275 1000 1285 880 Q1300 860 1325 875 L1315 1030 C1350 1060 1340 1110 1310 1130 C1270 1150 1200 1160 1180 1110Z M1228 1045 Q1220 1010 1270 1005 Q1310 1005 1320 1040 M1228 1045 Q1250 1040 1278 1035 Q1275 1060 1285 1075 M1432 1045 C1385 1010 1380 950 1430 948 C1485 950 1480 1010 1432 1045Z M1375 1180 Q1360 1100 1425 1065 L1450 1080 1475 1048 Q1550 1060 1555 1140 M1375 1180 L1545 1140 M1500 815 L1568 808 M1500 815 L1495 895 Q1500 905 1568 908 M1522 843 C1522 830 1542 830 1542 843 C1542 856 1522 856 1522 843Z M1070 1490 L1140 1430 1300 1365 1380 1520 1340 1568 M1070 1490 L1110 1568 M1140 1440 L1200 1568 M1235 1410 L1255 1450 M1265 1475 L1280 1505 M1220 1560 L1330 1455 M1310 1490 L1345 1560 M1225 1535 C1190 1490 1205 1478 1230 1480 C1260 1485 1250 1510 1225 1535Z M0 1320 Q50 1325 60 1350 Q80 1400 50 1420 L60 1470 0 1445 M95 1568 L105 1320 130 1300 M1480 1495 Q1480 1478 1500 1478 L1568 1465 M1480 1500 L1568 1500",
  },
  {
    o: [600, 1180], s: [0.3896, 0.3333],
    items: [
      ["spark", 1155, 188, 105, 5], ["camera", 550, 375, 185, -8], ["bell", 828, 425, 175, 12], ["people", 312, 425, 220, 3], ["gear", 118, 470, 110, 0], ["spark", 600, 510, 95, 20], ["star", 192, 595, 130, 15], ["star", 1043, 570, 95, 15], ["star", 145, 955, 160, 10],
      ["drop", 693, 928, 55, 10], ["spark", 485, 1190, 105, 10], ["star", 1190, 1040, 90, 12], ["heart", 1360, 1172, 95, -8], ["love", -18, 1170, 215, 0], ["spark", 1068, 1440, 75, 10],
    ],
    dots: [[1110, 28, 14], [1110, 90, 13], [679, 220, 18], [709, 282, 24], [771, 270, 12], [910, 243, 14], [900, 291, 22], [1203, 311, 15], [348, 273, 18], [176, 357, 16], [13, 456, 12], [45, 512, 17], [680, 346, 16], [750, 341, 13], [688, 402, 17], [691, 475, 20], [737, 514, 11], [827, 572, 22], [885, 577, 27], [954, 557, 17], [957, 610, 11], [1122, 518, 14], [1137, 578, 24], [1230, 415, 23], [1281, 380, 16], [1335, 395, 14], [1338, 480, 21], [1355, 580, 17], [1355, 670, 18], [1101, 643, 16], [912, 645, 15], [849, 655, 12], [73, 600, 26], [116, 587, 14], [106, 648, 15], [286, 579, 16], [313, 605, 17], [566, 628, 15], [638, 622, 17], [618, 674, 11], [576, 703, 12], [600, 775, 22], [120, 828, 13], [55, 869, 19], [16, 949, 13], [64, 1002, 15], [336, 958, 16], [257, 996, 15], [293, 1031, 13], [353, 1026, 20], [698, 998, 14], [547, 1138, 16], [593, 1143, 17], [411, 1227, 14], [432, 1287, 16], [475, 1351, 28], [102, 1280, 24], [115, 1359, 15], [248, 1371, 17], [176, 1438, 17], [242, 1432, 16], [988, 1376, 25], [931, 1396, 17], [1092, 1287, 15], [1103, 1339, 20], [1143, 1326, 17], [1182, 1314, 15], [1222, 1350, 23], [1287, 1320, 26], [1152, 1410, 20], [1259, 1392, 13], [1365, 1402, 22], [1316, 1054, 26], [1097, 1051, 15], [1135, 1091, 13], [1198, 1466, 28], [1283, 1460, 16]],
    d: "M0 65 L60 38 Q75 40 78 60 L85 105 70 115 60 160 20 185 0 220 M0 110 L45 90 M0 125 L48 105 M60 160 L100 150 Q115 140 100 130 L90 120 M88 0 C110 100 170 120 215 115 Q270 120 305 105 M130 75 Q160 50 178 105 M212 115 Q230 60 265 110 M305 0 C300 100 330 170 370 180 Q450 190 450 220 C440 270 380 280 378 310 Q400 320 450 290 C500 270 500 200 480 170 C430 110 410 60 425 0 M395 60 Q380 90 420 110 M450 160 Q450 190 485 185 M180 115 C130 150 130 200 150 220 C180 270 220 240 250 245 C270 280 200 290 200 315 Q260 320 285 280 C310 230 280 190 235 180 Q240 160 300 185 Q340 190 365 175 M265 160 Q300 130 312 180 M255 205 Q270 230 292 225 M455 270 Q460 240 485 250 M265 290 Q260 260 285 265 M525 0 C530 50 600 80 640 60 Q700 40 730 0 M515 40 C510 120 530 180 570 185 C620 170 650 110 662 115 C660 170 600 260 495 245 M520 45 Q600 80 700 65 M615 65 Q640 10 670 65 M540 25 Q600 50 620 0 M520 160 Q515 190 545 190 M580 190 Q610 185 605 160 M700 90 L1055 -10 M700 100 L720 220 Q725 235 745 232 L1060 150 Q1075 145 1072 120 L1060 30 1075 -5 M755 110 Q770 95 775 150 Q765 175 755 150Z M743 150 Q760 185 790 150 M768 175 V200 M820 110 L858 125 822 158Z M880 118 L1030 77 M995 140 L1005 148 1020 105 M1010 145 L1018 148 1037 110 M1155 0 Q1170 30 1150 45 Q1200 50 1180 70 L1190 100 1280 60 M1265 20 L1275 0 M1265 20 L1362 40 1368 0 M1275 35 L1238 270 Q1240 290 1260 292 L1320 295 Q1340 290 1340 270 L1352 45 M1275 65 L1350 78 M1258 140 L1345 150 M1250 215 L1340 230 M1295 125 V105 Q1310 85 1320 110 L1318 130Z M1285 200 L1288 180 Q1305 165 1312 185 L1310 205Z M780 25 L815 0 M945 330 C945 270 990 220 1040 218 C1100 220 1130 260 1138 305 Q1165 305 1162 325 L1155 345 Q1180 365 1185 385 L1165 405 1170 435 Q1160 470 1100 475 L980 490 Q955 485 955 460 Q930 455 940 430 L935 410 Q920 405 935 385 L945 370 Q920 365 930 350Z M935 355 L965 365 990 345 1010 370 1040 350 1060 365 1155 345 M940 390 L1150 350 M940 410 Q1050 400 1160 365 M940 435 L960 420 985 455 1020 430 1050 445 1100 415 1165 405 M945 330 L1138 305 M985 270 l-8 15 M1015 280 l8 12 M1045 245 l-3 15 M1080 245 l10 12 M1060 275 l8 12 M0 305 L25 270 30 250 40 285 110 280 130 250 135 300 Q160 320 110 315 C100 370 60 390 5 385 M0 320 Q20 340 18 385 M25 335 Q50 310 70 330 L55 335 M0 665 L60 670 62 690 90 695 80 765 60 745 55 770 0 768 M10 690 Q30 710 10 740 M1175 545 C1175 445 1300 445 1300 545 C1300 645 1175 645 1175 545Z M1215 500 Q1225 495 1265 545 L1245 548 1258 590 1245 595 1230 555 1212 570Z M435 620 C390 570 400 530 415 510 L440 525 480 500 495 550 Q530 545 528 570 Q510 610 450 625 Q430 640 440 700 Q440 720 475 745 M415 510 Q430 560 445 600 Q470 550 495 550 M440 690 C400 690 390 780 430 800 C500 850 530 780 528 720 C520 640 470 640 450 690 M680 580 Q750 560 790 620 L800 655 M680 580 Q700 620 675 635 Q665 670 650 670 L645 830 Q650 850 665 848 L775 830 M680 690 L702 705 685 715 M752 685 L738 695 752 700 M710 765 Q735 760 745 745 Q755 780 725 795 Q710 785 710 765Z M732 840 L740 890 Q755 910 770 890 M170 780 C165 720 240 670 300 685 C370 710 370 780 340 830 C310 880 240 900 200 865 Q170 830 170 780Z M205 785 C210 740 270 730 310 745 Q330 780 300 820 C260 860 210 850 205 785Z M185 730 L225 760 M235 700 L260 740 M300 685 L290 735 M355 750 L320 765 M345 820 L310 810 M250 890 L258 845 M180 840 L215 820 M255 685 L252 650 Q265 630 272 650 L278 680 M330 690 L370 655 Q395 650 392 675 L355 730 M175 740 Q150 735 138 745 Q135 765 165 775 M350 820 Q380 830 382 805 Q375 790 355 790 M245 885 L245 920 Q258 945 270 920 L272 880 M375 920 Q375 890 395 885 L600 820 Q615 820 622 835 L660 1005 Q660 1030 640 1040 L630 1060 640 1112 570 1080 450 1120 Q430 1120 420 1100Z M430 975 C430 865 558 865 558 975 C558 1085 430 1085 430 975Z M500 950 C500 925 530 925 530 950 C530 975 500 975 500 950Z M450 970 Q460 955 478 972 M463 1008 L535 985 Q540 1030 500 1040 Q470 1030 463 1008Z M580 1030 L590 1040 608 1000 M600 1040 L608 1042 628 995 M135 1090 Q138 1075 160 1075 L345 1072 Q362 1075 362 1090 L368 1270 Q365 1290 345 1293 L235 1297 185 1352 180 1297 Q145 1295 140 1275Z M178 1128 H198 V1170 H215 V1128 H235 V1228 H215 V1190 H198 V1228 H178Z M250 1155 H270 V1228 H250Z M250 1138 H270 M1210 890 L1230 870 1245 880 1270 850 1290 860 1325 835 M1210 940 Q1240 1000 1270 1000 L1340 970 1350 790 Q1350 770 1320 790 M1250 720 Q1310 730 1320 790 L1210 855 M1215 790 Q1260 780 1280 740 M1160 635 Q1185 625 1195 655 M1290 655 Q1310 660 1310 675 Q1290 690 1275 680 M745 1065 Q735 1035 760 1035 Q780 1050 800 1050 L930 1030 Q950 1080 945 1120 Q930 1200 830 1208 Q760 1200 760 1100 Q745 1090 745 1065Z M795 1095 C795 1070 825 1070 825 1095 C825 1125 795 1125 795 1095Z M868 1075 C868 1048 900 1048 900 1075 C900 1102 868 1102 868 1075Z M840 1105 Q850 1090 862 1105 L852 1118Z M852 1118 Q840 1145 828 1130 M852 1118 Q870 1135 882 1115 M945 1120 Q1000 1120 1018 1080 Q1025 1050 1010 1030 M1035 1030 Q1050 1090 1040 1130 C1060 1200 1070 1280 1020 1300 Q980 1310 970 1290 Q990 1260 1015 1270 Q1020 1230 1000 1220 L930 1280 Q940 1330 900 1335 Q850 1345 850 1325 Q860 1300 890 1305 M830 1208 L870 1280 870 1305 M1118 1140 Q1120 1128 1135 1125 L1283 1108 1270 1150 1277 1235 Q1275 1250 1260 1252 L1145 1270 Q1130 1268 1128 1255Z M1148 1165 L1242 1152 Q1248 1165 1238 1168 L1150 1183Z M1150 1205 L1222 1193 Q1226 1206 1216 1210 L1152 1220Z M530 1440 L545 1430 C530 1380 510 1330 520 1300 L525 1250 Q540 1230 560 1240 L610 1310 Q620 1330 590 1340 Q565 1340 555 1300 M530 1440 L520 1472 M545 1430 L635 1445 C680 1390 700 1330 770 1260 Q775 1240 745 1248 L685 1325 740 1195 Q745 1175 725 1180 L690 1240 Q690 1170 682 1150 Q665 1140 658 1170 L655 1270 M665 1315 Q655 1220 570 1205 Q540 1210 560 1230 Q600 1250 618 1300 M635 1445 L645 1472 M345 1430 C300 1390 290 1340 315 1325 Q335 1320 345 1340 Q365 1310 388 1335 Q380 1390 345 1430Z M345 1430 C300 1380 260 1400 275 1425 Q280 1460 345 1440 M345 1430 Q400 1380 425 1395 Q440 1430 415 1440 Q430 1455 410 1472 M705 1472 Q740 1380 800 1370 C860 1370 870 1430 920 1435 Q980 1430 1015 1472 M755 1450 Q755 1430 785 1430 Q785 1410 800 1410 Q820 1420 810 1435 Q835 1440 825 1450 L815 1472 M0 1348 L60 1350 Q65 1370 50 1380 L30 1380 25 1472 M70 1472 Q80 1430 110 1425 Q130 1440 130 1472",
  },
  {
    o: [60, 1660], s: [0.3444, 0.3333],
    items: [
      ["star", 180, 318, 90, 15], ["chat", 252, 593, 325, -7], ["chat2", 400, 758, 335, -7], ["compass", 10, 390, 235, 0], ["note", 925, 597, 90, 5], ["plane", 730, 635, 150, 65], ["cloud", 1032, 865, 150, -5], ["cloud", 30, 945, 150, -10],
      ["spark", 260, 947, 105, 8], ["spark", 1080, 992, 105, 5], ["gear", 1168, 1124, 125, 0], ["star", 1047, 1275, 105, 10], ["cloud", 65, 1368, 120, -15], ["saturn", 1435, 1362, 170, 10], ["star", 25, 10, 85, 15],
    ],
    dots: [[72, 218, 19], [145, 228, 15], [168, 436, 18], [216, 458, 14], [278, 461, 10], [138, 497, 17], [22, 563, 12], [5, 643, 24], [18, 724, 12], [78, 735, 13], [156, 763, 25], [75, 811, 12], [112, 856, 19], [176, 859, 18], [485, 529, 31], [563, 511, 19], [623, 502, 16], [683, 507, 20], [503, 602, 13], [562, 614, 18], [620, 353, 18], [637, 404, 12], [703, 417, 23], [633, 661, 15], [674, 724, 12], [644, 776, 23], [793, 735, 12], [350, 896, 14], [404, 882, 19], [457, 889, 14], [642, 902, 17], [700, 889, 17], [1404, 709, 11], [1391, 777, 19], [1438, 807, 16], [1455, 926, 30], [1147, 936, 14], [1194, 995, 19], [1446, 1003, 14], [1518, 1003, 18], [1468, 1074, 13], [1422, 1136, 27], [1392, 1201, 13], [1480, 1184, 14], [1253, 1228, 13], [1142, 1265, 12], [1259, 1300, 24], [1351, 1276, 15], [1490, 1248, 23], [1188, 1332, 16], [1085, 1357, 12], [920, 1280, 23], [836, 1285, 13], [888, 1348, 15], [982, 1348, 12], [759, 1247, 17], [794, 1333, 11], [762, 1174, 18], [16, 1250, 14], [98, 1243, 23], [1262, 1389, 13], [600, 1392, 20], [435, 1375, 22], [1469, 592, 13], [1416, 560, 18], [1521, 565, 25]],
    d: "M85 115 L95 0 M112 0 L112 70 Q115 80 130 82 L520 125 Q540 122 540 105 L552 0 M565 165 L580 0 M20 112 Q15 160 50 175 L590 232 Q640 230 642 182 L415 155 408 172 275 155 262 138 20 110Z M250 40 Q350 80 430 0 M250 40 L265 0 M270 20 Q350 40 400 0 M640 0 Q650 60 725 70 M675 10 Q690 45 725 35 M650 140 Q650 110 690 112 L728 115 M650 140 Q655 165 715 170 Q690 220 690 250 L712 270 M690 260 Q630 265 640 310 Q650 340 728 340 M248 235 L300 240 293 295 243 290Z M360 243 L412 250 405 305 353 298Z M293 297 L353 300 350 325 375 330 368 412 338 410 340 382 295 380 290 405 262 402 270 325 295 325Z M462 257 L522 285 500 345 485 310 C440 330 430 400 480 425 C540 450 580 380 540 330 Q550 305 570 330 C600 420 540 460 490 450 C420 430 410 340 475 295Z M850 690 Q900 690 962 735 L880 965 Q830 990 785 945Z M882 697 l-12 25 M905 705 l-12 28 M925 717 l-10 25 M943 730 l-8 18 M830 780 Q890 785 925 822 M810 857 Q860 855 900 890 M790 915 Q850 910 868 955 M802 970 C802 940 842 940 842 970 C842 1000 802 1000 802 970Z M995 560 L1020 610 Q1020 750 1050 757 Q1090 755 1095 730 L1070 660 M1050 560 Q1055 670 1120 680 M1120 590 Q1140 680 1195 685 Q1270 650 1240 570 M1300 560 L1305 660 Q1320 690 1355 682 Q1380 670 1370 640 L1350 560 M1300 580 Q1270 640 1240 655 M1150 610 Q1190 610 1220 600 Q1215 650 1180 645 Q1155 640 1150 610Z M1050 600 Q1020 610 1010 590 M1165 575 v8 M1185 572 v8 M1165 860 Q1200 840 1210 790 Q1220 740 1260 730 L1255 700 1305 718 1275 765 1265 745 Q1230 760 1230 800 Q1225 860 1180 877 Q1160 878 1165 860Z M1135 780 Q1130 760 1200 768 Q1215 790 1145 795Z M1243 810 L1285 805 1280 785 1335 803 1300 845 1290 825 1245 828Z M1460 660 Q1465 645 1568 630 M1460 665 L1530 930 Q1535 945 1568 948 M1480 670 L1550 925 M1480 670 L1568 650 M1535 735 Q1535 720 1568 715 M1222 925 Q1220 905 1240 905 L1310 885 1370 925 1408 1080 Q1410 1095 1390 1100 L1295 1115 Q1280 1118 1275 1100Z M1310 885 L1322 938 1370 925 M1305 985 L1270 1010 1318 1040 M1328 960 L1320 1045 M1340 975 L1370 995 1342 1028 M918 950 Q990 970 995 1010 Q990 1050 965 1045 Q925 1040 918 950Z M972 1045 L1000 1035 1065 1190 Q1080 1220 1070 1230 Q1050 1225 1040 1195Z M765 1070 Q770 1050 810 1040 L850 1020 Q870 1030 865 1075 Q880 1095 930 1100 Q935 1120 905 1140 L890 1185 Q860 1195 840 1180 Q840 1130 810 1120 Q765 1110 765 1070Z M360 985 Q365 950 400 948 L740 800 Q750 805 745 840 Q740 920 722 965 M400 948 Q420 960 440 1028 M360 985 L380 1028 M475 985 C475 905 588 905 588 985 Q588 1010 575 1028 M615 1000 C615 915 730 915 730 1000 L725 1028 M635 1000 L690 990 M650 975 L670 1020 M675 970 L650 1020 M100 1028 Q130 960 155 968 Q200 980 205 1028 M125 1028 Q140 980 165 980 Q180 1000 185 1028 M0 1065 L80 1028 M15 1065 L25 1190 Q35 1215 48 1190 L40 1060 M0 1145 L130 1152 M170 1420 Q180 1375 240 1375 Q290 1380 300 1420 M240 1378 Q330 1370 320 1400 L310 1425 M695 1425 Q720 1395 745 1400 Q780 1365 830 1390 L828 1425 M500 1398 L510 1425 M500 1398 L565 1420 M1108 1395 L1150 1420 M1115 1385 L1210 1425 M1568 1060 Q1510 1070 1512 1115 Q1515 1170 1568 1178 M1568 1080 Q1530 1090 1532 1115 Q1535 1150 1568 1155 M920 0 L930 30 957 10 M1100 0 L1115 30 M1150 0 L1190 30 M1240 0 L1225 30 M1320 0 L1350 30 M1380 0 L1370 30 M1205 30 L1260 0",
  },
  {
    o: [600, 1660], s: [0.3896, 0.3333],
    items: [
      ["bolt", 1350, 105, 145, 8], ["heart", 1295, 415, 95, -12], ["gear", 1273, 875, 105, 0], ["gear", 1115, 1276, 115, 0], ["slider", 275, 1080, 240, 8], ["drop", 988, 1028, 78, 5], ["mail", 780, 1150, 260, -10], ["cloud", 1063, 1145, 155, -5], ["compass", 465, 1245, 185, 25],
      ["spark", 293, 1360, 110, 5], ["heart", 425, 1395, 75, -15], ["cloud", 1245, 1430, 165, 0], ["saturn", 1020, 1405, 210, 55], ["star", 752, 965, 70, 10], ["star", 1285, 1530, 80, 8], ["drop", 1334, 1482, 50, -10], ["drop", 1255, 1505, 50, 0], ["drop", 1195, 1500, 60, 10],
    ],
    dots: [[1287, 237, 20], [1327, 286, 20], [1272, 320, 16], [1228, 354, 21], [1235, 500, 17], [1360, 502, 13], [1326, 776, 19], [1353, 932, 24], [1111, 1036, 23], [928, 1107, 22], [948, 1164, 17], [110, 956, 16], [157, 972, 14], [75, 1030, 25], [129, 1065, 21], [107, 1118, 14], [153, 1158, 15], [76, 1197, 25], [127, 1213, 12], [225, 1192, 21], [293, 1223, 15], [360, 1216, 12], [260, 1265, 14], [352, 1285, 16], [422, 1117, 28], [545, 1172, 15], [600, 1197, 18], [571, 1243, 15], [615, 1118, 17], [671, 1288, 20], [728, 1301, 14], [594, 1310, 17], [790, 1334, 21], [848, 1290, 24], [918, 1293, 17], [988, 1258, 31], [1189, 1325, 17], [1241, 1290, 25], [1297, 1312, 17], [1302, 1231, 19], [1200, 1208, 26], [1270, 1175, 12], [1125, 1378, 16], [1367, 1432, 14], [47, 1272, 11], [88, 1313, 23], [147, 1309, 20], [219, 1317, 14], [15, 1328, 27], [501, 1357, 12], [637, 1388, 24], [682, 1360, 11], [757, 1390, 13], [856, 1407, 17], [1110, 1568, 20], [1135, 1495, 12], [1375, 1210, 22], [635, 570, 16], [713, 565, 18], [1142, 988, 14], [472, 22, 12], [1198, 30, 26], [1283, 18, 16], [1180, 1766, 22], [1118, 1785, 12], [1040, 1780, 20], [1256, 1800, 12], [1367, 1757, 20]],
    d: "M270 5 Q340 30 430 10 M310 30 L350 0 370 30 M525 30 L530 0 M620 30 L610 0 M755 30 Q770 0 800 15 M1265 80 Q1280 100 1265 140 L1235 180 1240 235 Q1230 250 1222 235 L1212 190 M1250 90 Q1255 130 1212 160 M1385 310 Q1360 340 1358 390 Q1365 450 1385 470 M1385 340 Q1370 380 1385 440 M1280 520 Q1300 500 1315 525 L1295 590 1290 630 Q1315 670 1305 720 Q1290 750 1260 745 L1212 720 M1280 520 L1258 600 1250 635 M1232 700 C1232 680 1255 680 1255 700 C1255 722 1232 722 1232 700Z M1212 780 Q1222 790 1212 805 M0 635 L90 605 200 560 M90 605 L148 885 0 945 M100 610 L255 565 Q280 570 285 605 M148 885 L222 868 M120 650 L135 680 147 645 155 675 170 645 M180 645 L222 632 M185 658 L222 648 M152 710 L222 690 M155 722 L222 703 M160 762 L225 742 M160 775 L225 757 M170 815 L225 800 M172 827 L225 812 M0 715 L50 700 Q65 705 55 718 L0 735 M20 800 Q20 770 35 775 Q48 780 40 795 Q70 780 72 800 Q70 820 50 820 Q70 850 55 860 Q35 860 35 840 Q15 860 8 845 Q5 825 20 820 Q0 810 20 800Z M320 978 Q360 1010 400 978 M425 560 Q430 590 460 595 Q490 595 500 580 Q560 600 600 560 M300 560 L345 608 M330 560 L388 608 M785 560 L780 608 M860 560 L865 608 M940 560 L900 608 M1015 560 V608 M1045 560 V608 M1090 560 L1110 608 M440 985 L480 1110 Q490 1135 520 1125 Q560 1110 555 1075 M465 1010 Q480 980 520 978 M465 1010 Q480 1030 500 1020 Q520 1080 570 1070 Q630 1050 628 985 M545 1030 Q570 1030 585 1010 M615 1050 Q640 1070 670 1050 Q690 1020 675 980 M840 985 Q830 1020 850 1030 L905 1055 Q915 1050 950 985 M0 1060 L10 1035 35 1070 5 1100 M0 1178 Q50 1150 48 1100 M0 1155 Q30 1140 35 1100 M1165 1080 Q1170 1050 1185 1045 C1190 950 1300 940 1320 1035 Q1345 1070 1335 1110 L1330 1140 Q1315 1145 1310 1130 L1205 1130 1200 1150 Q1185 1155 1175 1140Z M1195 1050 C1200 960 1285 960 1298 1035Z M1182 1085 C1182 1065 1210 1065 1210 1085 C1210 1107 1182 1107 1182 1085Z M1292 1070 C1292 1050 1318 1050 1318 1070 C1318 1092 1292 1092 1292 1070Z M30 1425 Q80 1370 160 1372 Q230 1375 225 1410 L215 1425 M105 1410 q20 -10 45 5 M135 1392 l15 5 M185 1390 l-8 12 M510 1425 Q520 1395 555 1398 Q580 1400 585 1425 M692 1408 L740 1425 M1385 1340 Q1375 1350 1350 1350 Q1365 1320 1365 1285 Q1375 1320 1385 1320 M1075 1738 Q1060 1690 1100 1640 Q1140 1610 1160 1600 M1075 1738 Q1110 1750 1140 1690 L1165 1650 M1145 1630 l20 -20 M1385 1610 Q1355 1620 1358 1640 Q1360 1665 1385 1670 M100 1825 L105 1838 240 1825",
  },
];

function Wallpaper() {
  return (
    <svg className="absolute inset-0 h-full w-full" viewBox="60 355 1080 1918" fill="none" stroke="#dad1c7" strokeWidth="2.5" strokeLinecap="round" strokeLinejoin="round" aria-hidden="true">
      {PATCHES.map((p, i) => {
        const [ox, oy] = p.o;
        const [sx, sy] = p.s;
        return (
          <g key={i}>
            {p.items.map(([name, x, y, size, rot], k) => {
              const s = size / 300;
              return (
                <g key={k} transform={`translate(${ox + x * sx} ${oy + y * sy}) rotate(${rot}) scale(${s})`} strokeWidth={2.5 / s}>
                  {SYMBOLS[name]}
                </g>
              );
            })}
            {p.dots.map(([x, y, r], k) => (
              <circle key={k} cx={ox + x * sx} cy={oy + y * sy} r={r / 3} />
            ))}
            <g transform={`translate(${ox} ${oy}) scale(${sx} ${sy})`} strokeWidth="7">
              <path d={p.d} />
            </g>
          </g>
        );
      })}
    </svg>
  );
}

/* ---------- Device frame ---------- */

function roundRect(x0, y0, x1, y1, r) {
  const c = r * 0.26;
  return `M${x0} ${y0 + r}C${x0} ${y0 + c} ${x0 + c} ${y0} ${x0 + r} ${y0}H${x1 - r}C${x1 - c} ${y0} ${x1} ${y0 + c} ${x1} ${y0 + r}V${y1 - r}C${x1} ${y1 - c} ${x1 - c} ${y1} ${x1 - r} ${y1}H${x0 + r}C${x0 + c} ${y1} ${x0} ${y1 - c} ${x0} ${y1 - r}Z`;
}

function Bezel() {
  const band = roundRect(22, 22, 1182.5, 2456, 180);
  return (
    <svg className="absolute inset-0" width="1211" height="2474" viewBox="0 0 1211 2474" aria-hidden="true">
      <defs>
        <linearGradient id="rim" x1="0" y1="0" x2="0" y2="1">
          <stop offset="0" stopColor="#8f908d" /><stop offset=".03" stopColor="#626262" /><stop offset="1" stopColor="#4a4a4a" />
        </linearGradient>
        <linearGradient id="leftSide" x1="0" y1="0" x2="0" y2="1">
          <stop offset="0" stopColor="#5c5c5c" /><stop offset=".12" stopColor="#6a6a6a" /><stop offset=".5" stopColor="#4c4c4c" /><stop offset="1" stopColor="#444" />
        </linearGradient>
        <linearGradient id="rightSide" x1="0" y1="0" x2="0" y2="1">
          <stop offset="0" stopColor="#5f5f5f" /><stop offset=".93" stopColor="#5a5a5a" /><stop offset="1" stopColor="#484848" />
        </linearGradient>
        <linearGradient id="topBand" x1="0" y1="22" x2="0" y2="38" gradientUnits="userSpaceOnUse">
          <stop offset="0" stopColor="#333" /><stop offset=".3" stopColor="#585858" /><stop offset=".8" stopColor="#5a5a5a" /><stop offset="1" stopColor="#2c2c2c" />
        </linearGradient>
        <linearGradient id="bottomBand" x1="0" y1="2440" x2="0" y2="2456" gradientUnits="userSpaceOnUse">
          <stop offset="0" stopColor="#2a2a2a" /><stop offset=".4" stopColor="#444" /><stop offset="1" stopColor="#4e4e4e" />
        </linearGradient>
        <radialGradient id="shine" cx="75" cy="75" r="150" gradientUnits="userSpaceOnUse">
          <stop offset="0" stopColor="#a2a2a2" /><stop offset=".4" stopColor="#929292" /><stop offset="1" stopColor="#929292" stopOpacity="0" />
        </radialGradient>
        <radialGradient id="fadeTR" cx="1138" cy="52" r="105" gradientUnits="userSpaceOnUse">
          <stop offset=".3" stopColor="#030303" /><stop offset="1" stopColor="#030303" stopOpacity="0" />
        </radialGradient>
        <radialGradient id="fadeBL" cx="62" cy="2420" r="120" gradientUnits="userSpaceOnUse">
          <stop offset=".3" stopColor="#030303" /><stop offset="1" stopColor="#030303" stopOpacity="0" />
        </radialGradient>
        <clipPath id="bandClip"><path d={band} /></clipPath>
      </defs>
      <rect x="1198" y="593" width="13" height="170" rx="5" fill="#1b1b1b" />
      <rect x="1204.500" y="612" width="4" height="142" fill="#4a4a4a" />
      <rect x="1203.500" y="597" width="4.500" height="10" rx="2" fill="#f4f4f4" />
      <rect x="1198" y="933" width="11" height="343" rx="4" fill="#0c0c0c" />
      <path d={roundRect(2, 1, 1204, 2473, 198)} fill="url(#rim)" />
      <path d={roundRect(4, 3, 1202.5, 2471.5, 196)} fill="#343536" />
      <path d={roundRect(7.5, 8, 1198.5, 2467, 193)} fill="#000" />
      <path d={roundRect(12, 13, 1193, 2463, 189)} fill="none" stroke="#2a2a2a" strokeWidth="2.500" />
      <path d={roundRect(17, 18, 1188, 2459.5, 185)} fill="none" stroke="#0e0e0e" strokeWidth="2" />
      <g clipPath="url(#bandClip)">
        <path d={band} fill="url(#leftSide)" />
        <rect x="1040" y="0" width="171" height="2474" fill="url(#rightSide)" />
        <rect x="190" y="20" width="850" height="20" fill="url(#topBand)" />
        <rect x="190" y="2439" width="850" height="20" fill="url(#bottomBand)" />
        <rect x="0" y="0" width="300" height="300" fill="url(#shine)" />
        <rect x="1000" y="0" width="211" height="200" fill="url(#fadeTR)" />
        <rect x="0" y="2270" width="240" height="204" fill="url(#fadeBL)" />
      </g>
      <path d={band} fill="none" stroke="#1d1d1d" strokeWidth="1.500" />
      <path d={roundRect(39, 38, 1165.5, 2441, 165)} fill="#000" />
    </svg>
  );
}

/* ---------- Bars ---------- */

function StatusBar() {
  return (
    <div
      className="relative flex h-[136px] shrink-0 items-center bg-[#5f768c] pl-[158px] pr-[77px] text-white"
      style={{ clipPath: "path('M0 136 V125 C0 32 32 0 125 0 H955 C1048 0 1080 32 1080 125 V136 Z')" }}
    >
      <svg className="absolute left-[34px] top-[31px]" width="77" height="77" viewBox="0 0 77 77">
        <circle cx="38.500" cy="38.500" r="37.500" fill="#000" />
        <circle cx="38.500" cy="38.500" r="28" fill="#0b0b0b" />
        <circle cx="38.500" cy="38.500" r="16.500" fill="#010101" />
        <circle cx="38.500" cy="39.500" r="9.500" fill="#2a303e" />
        <path d="M34 33 C39 30 40 33 38 36 C34 39 36 44 38 48 C47 50 50 40 45 33 C42 38 38 40 38 42" fill="#8196b8" />
        <circle cx="41" cy="42" r="2.500" fill="#a9bddf" />
      </svg>
      <span className="mt-[8px] w-[76px] text-[38.500px] leading-[45px]">1:23</span>
      <svg className="ml-[24px] mt-[3px]" width="24" height="34" viewBox="0 0 24 34" fill="none" stroke="#fff" strokeWidth="3.300">
        <circle cx="12" cy="6.500" r="3.900" />
        <path d="M12 30 L3.800 21.500 C0 15.500 7.500 12 12 17.500 C16.500 12 24 15.500 20.200 21.500 Z" />
      </svg>
      <svg className="ml-[28px] mt-[4px]" width="40" height="40" viewBox="0 0 40 40" fill="none" stroke="#fff">
        <circle cx="20" cy="20" r="14.200" strokeWidth="4" />
        <circle cx="20" cy="20" r="17" strokeWidth="4.600" strokeDasharray="3.800 3.820" />
        <path d="M6 20.500 H34 M20.300 21 V34" strokeWidth="3.800" />
        <circle cx="15" cy="13" r="1.500" fill="#fff" stroke="none" />
        <circle cx="26" cy="13" r="1.500" fill="#fff" stroke="none" />
      </svg>
      <svg className="ml-auto mt-[3px]" width="122" height="38" viewBox="0 0 122 38" fill="#fff">
        <path d="M0 10 C10 -2 31 -2 41.500 10 L21 35.500 Z" />
        <path fillRule="evenodd" d="M45 36 L79.500 1 V36 Z M69 16 L76.500 9 V32.500 H69 Z" />
        <path d="M106 1 H114.500 V4.500 H119 Q121 4.500 121 6.500 V35 Q121 37 119 37 H102 Q100 37 100 35 V6.500 Q100 4.500 102 4.500 H106 Z" />
      </svg>
    </div>
  );
}

function Header() {
  return (
    <header className="flex h-[154px] shrink-0 items-center bg-[#2b3a4d] pl-[53px] pr-[28px]">
      <svg width="48" height="38" viewBox="0 0 48 38" fill="none" stroke="#f3f4f6" strokeWidth="5.500">
        <path d="M46 19.500 H5 M20 3.500 L4.500 19.500 L20 35" strokeLinejoin="round" />
      </svg>
      <svg className="ml-[22px]" width="113" height="112" viewBox="0 0 112 111">
        <circle cx="56" cy="55.500" r="55.200" fill="#95a5a4" />
        <path fill="#2b3a4d" d="M54 24 C60 22 63 25 65 28 C71 29 73 38 71 46 C73 50 71 54 69 56 C68 61 65 65 63.500 67 V71 C65 76 72 76 77 78 C83 80 86 84 88 88 C80 97 68 102 55 102 C42 102 30 97 22.600 88 C25 83 28 80 34 77.500 C40 76 46 75 47.500 71 V67 C45 64 43 60 42 56 C39 54 38 50 40 46 C37 34 44 24 54 24Z" />
      </svg>
      <h1 className="ml-[26px] mt-[5px] text-[55.400px] font-bold leading-[64px] text-white">Admin</h1>
      <svg className="ml-auto" width="48" height="64" viewBox="0 0 48 64">
        <path fill="#fff" d="M12 2 Q15 1 21 1.500 Q24 2 24 4 L22 17 Q21 20 17 20 L13 21 Q8 32 13 43 L18 44 Q21 44.500 22 48 L24 58 Q24 62 21 62.500 H12 Q7 61 4 53 Q-1 32 4 12 Q7 4 12 2Z" />
        <path d="M21 32 H42" stroke="#8f98a5" strokeWidth="5" />
        <path d="M35 24 Q38 31 44 32 Q38 33 35 40" fill="none" stroke="#dfe3e8" strokeWidth="3.200" />
      </svg>
      <svg className="ml-[33px]" width="67" height="48" viewBox="0 0 67 48" fill="none" stroke="#d3d8df" strokeWidth="3">
        <path d="M5 3 H43 Q48 4 48 9 V39 Q48 44 43 45.500 H5 Q2 44 1.500 40 V8 Q2 4 5 3Z" />
        <path d="M48 18.500 L65 8.500 V40 L48 29" />
      </svg>
    </header>
  );
}

/* ---------- Messages ---------- */

function Received({ text, time, width }) {
  return (
    <div className={`relative ml-[45px] h-[115px] shrink-0 rounded-[10px] rounded-tl-none bg-white pl-[17px] pr-[12px] pt-[18px] text-[#465b66] drop-shadow-[0_1.500px_1px_rgba(0,0,0,0.18)] ${width}`}>
      <svg className="absolute left-[-24px] top-0" width="25" height="33" viewBox="0 0 25 33">
        <path d="M0.500 0 H25 V32.500 L2.500 6 Q0.500 3 0.500 0Z" fill="#fff" />
      </svg>
      <p className="whitespace-nowrap text-[44px] leading-[52px]">{text}</p>
      <p className="mt-[4px] whitespace-nowrap text-right text-[24.750px] leading-[29px]">{time}</p>
    </div>
  );
}

function Sent({ lines, time, size, notch }) {
  return (
    <div className={`relative mr-[69px] shrink-0 self-end rounded-b-[10px] bg-[#cbeafc] pl-[11px] pt-[18px] text-[#465b66] drop-shadow-[0_1.500px_1px_rgba(0,0,0,0.18)] ${notch ? "" : "rounded-tl-[10px]"} ${size}`}>
      <svg className="absolute right-[-26px] top-0" width="27" height="33" viewBox="0 0 27 33">
        <path d="M0 0 H26.500 L25 3 L1 32.500 H0Z" fill="#cbeafc" />
      </svg>
      {notch && (
        <svg className="absolute left-[-4px] top-0" width="5" height="10" viewBox="0 0 5 10">
          <path d="M0 0 H5 V10 L0.500 5Z" fill="#cbeafc" />
        </svg>
      )}
      {lines.map((line) => (
        <p key={line} className="whitespace-nowrap text-[44px] leading-[52px]">{line}</p>
      ))}
      <p className="mt-[12px] whitespace-nowrap text-[24.750px] leading-[29px]">{time}</p>
    </div>
  );
}

function Composer() {
  return (
    <div className="relative flex h-[138px] shrink-0 items-start pl-[11px]">
      <div className="flex h-[132px] w-[948px] items-center rounded-[54px] bg-white pl-[27px] pt-[2px]">
        <span className="text-[50.100px] leading-[58px] text-[#757575]">Enter your message</span>
      </div>
      <svg className="ml-[33px] mt-[35px]" width="67" height="68" viewBox="0 0 67 68">
        <path d="M3 3 L63.500 34 L3 65 L7.500 39.500 L37 34 L7.500 28.500 Z" fill="#26374c" stroke="#26374c" strokeWidth="3" strokeLinejoin="round" />
      </svg>
    </div>
  );
}

function NavBar() {
  return (
    <nav className="flex h-[132px] shrink-0 items-center pl-[236px] pr-[239px]">
      <svg width="40" height="46" viewBox="0 0 40 46"><path d="M3 23 L37 3 V43Z" fill="#999" stroke="#999" strokeWidth="4" strokeLinejoin="round" /></svg>
      <div className="ml-[244px] h-10 w-10 rounded-full bg-[#999]" />
      <div className="ml-auto h-[41px] w-[41px] rounded-[4px] bg-[#999]" />
    </nav>
  );
}

export default function App() {
  return (
    <div className="relative h-[2474px] w-[1211px] overflow-hidden bg-white font-['Roboto',sans-serif]">
      <Bezel />
      <div className="relative ml-[60px] flex w-[1080px] flex-col pt-[65px]">
        <StatusBar />
        <Header />
        <main className="relative flex h-[1918px] shrink-0 flex-col bg-[#e5ddd6]">
          <Wallpaper />
          <div className="relative flex flex-1 flex-col gap-[17px] pt-[640px]">
            <Sent lines={["Hi"]} time="02:17 PM" size="h-[123px] w-[155px]" notch />
            <Received text="Hello" time="09:39 PM" width="w-[157px]" />
            <Received text="Welcome back" time="01:04 PM" width="w-[316px]" />
            <Sent lines={["Hey 👋"]} time="01:18 PM" size="h-[123px] w-[169px]" />
            <Received text="Doing great??" time="01:18 PM" width="w-[296px]" />
            <Sent lines={["Yeah. Having some wonderful time", "with my family"]} time="01:19 PM" size="h-[175px] w-[760px]" />
            <Sent lines={["What's about you?"]} time="01:19 PM" size="h-[123px] w-[383px]" />
            <Received text="Great 😃" time="01:22 PM" width="w-[200px]" />
          </div>
          <Composer />
        </main>
        <NavBar />
      </div>
    </div>
  );
}
